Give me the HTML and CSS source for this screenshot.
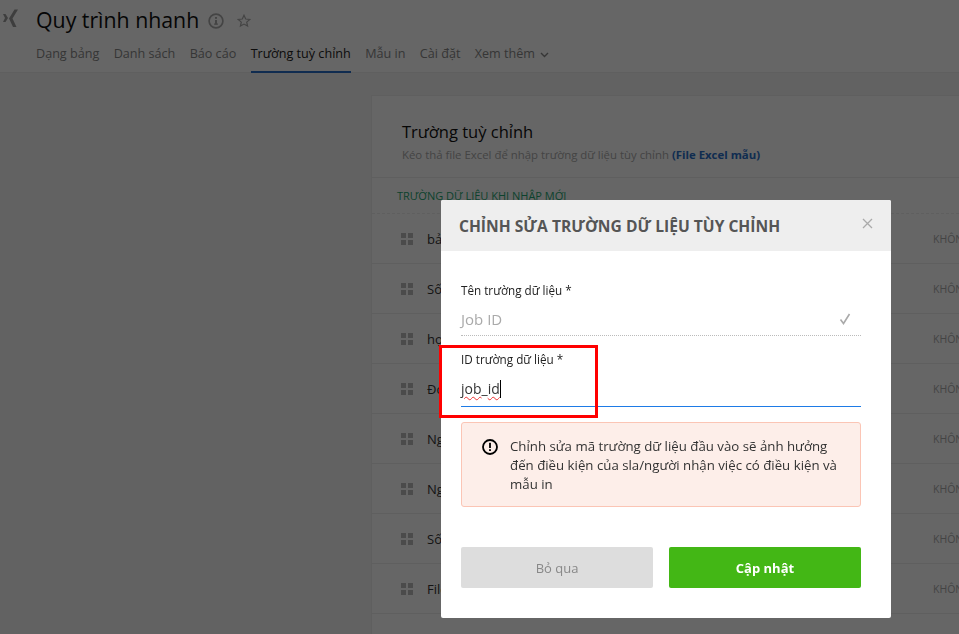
FILE: index.html
```html
<!DOCTYPE html>
<html lang="vi">
<head>
<meta charset="utf-8">
<title>Quy trình nhanh</title>
<link rel="stylesheet" href="styles.css">
</head>
<body>
<header class="topbar">
  <div class="title-row">
    <svg class="logo" width="20" height="20" viewBox="0 0 20 20"><path d="M3 5h2.500L8 9l-2.500 4H3l2-4zM14.500 0.500H18L12.500 9.500 16.500 18h-3.500L9 9.500z" fill="#9c9c9c"/></svg>
    <h1 class="title">Quy trình nhanh</h1>
    <svg class="info" width="16" height="16" viewBox="0 0 16 16"><circle cx="8" cy="8" r="6.900" fill="none" stroke="#aaa" stroke-width="1.700"/><rect x="7" y="7" width="2" height="4.500" fill="#aaa"/><rect x="6" y="10.500" width="4" height="1.200" fill="#aaa"/><rect x="7" y="4" width="2" height="1.800" fill="#aaa"/></svg>
    <svg class="star" width="14" height="14" viewBox="0 0 14 14"><path d="M7 1.200l1.700 3.800 4.100.4-3.100 2.700.9 4L7 10.100 3.400 12.100l.9-4-3.100-2.700 4.100-.4z" fill="none" stroke="#aaa" stroke-width="1.200"/></svg>
  </div>
  <nav class="tabs">
    <a class="tab">Dạng bảng</a>
    <a class="tab">Danh sách</a>
    <a class="tab">Báo cáo</a>
    <a class="tab tab-active">Trường tuỳ chỉnh</a>
    <a class="tab">Mẫu in</a>
    <a class="tab">Cài đặt</a>
    <a class="tab">Xem thêm <svg class="caret" width="9" height="6" viewBox="0 0 9 6"><path d="M1 1l3.500 3.500L8 1" fill="none" stroke="#888" stroke-width="1.400"/></svg></a>
  </nav>
</header>
<main class="content">
  <section class="card">
    <div class="card-head">
      <h2 class="card-title">Trường tuỳ chỉnh</h2>
      <p class="card-sub">Kéo thả file Excel để nhập trường dữ liệu tùy chỉnh <b class="link">(File Excel mẫu)</b></p>
    </div>
    <div class="section-label">TRƯỜNG DỮ LIỆU KHI NHẬP MỚI</div>
    <ul class="rows">
      <li class="row"><span class="grip"><i></i><i></i><i></i><i></i></span><span class="row-name">bảng</span><span class="row-tag">KHÔNG</span></li>
      <li class="row"><span class="grip"><i></i><i></i><i></i><i></i></span><span class="row-name">Số</span><span class="row-tag">KHÔNG</span></li>
      <li class="row"><span class="grip"><i></i><i></i><i></i><i></i></span><span class="row-name">họ</span><span class="row-tag">KHÔNG</span></li>
      <li class="row"><span class="grip"><i></i><i></i><i></i><i></i></span><span class="row-name">Đơn</span><span class="row-tag">KHÔNG</span></li>
      <li class="row"><span class="grip"><i></i><i></i><i></i><i></i></span><span class="row-name">Ngày</span><span class="row-tag">KHÔNG</span></li>
      <li class="row"><span class="grip"><i></i><i></i><i></i><i></i></span><span class="row-name">Ngày</span><span class="row-tag">KHÔNG</span></li>
      <li class="row"><span class="grip"><i></i><i></i><i></i><i></i></span><span class="row-name">Số</span><span class="row-tag">KHÔNG</span></li>
      <li class="row"><span class="grip"><i></i><i></i><i></i><i></i></span><span class="row-name">File</span><span class="row-tag">KHÔNG</span></li>
    </ul>
  </section>
</main>
<div class="overlay"></div>
<div class="modal">
  <div class="modal-head">
    <h3 class="modal-title">CHỈNH SỬA TRƯỜNG DỮ LIỆU TÙY CHỈNH</h3>
    <svg class="close" width="11" height="11" viewBox="0 0 11 11"><path d="M1 1l9 9M10 1l-9 9" stroke="#aaa" stroke-width="1.300"/></svg>
  </div>
  <div class="modal-body">
    <div class="field">
      <label class="label">Tên trường dữ liệu *</label>
      <div class="value value-muted"><span>Job ID</span><svg class="check" width="12" height="12" viewBox="0 0 12 12"><path d="M1.500 6.500l3 4L10.500 1" fill="none" stroke="#aaa" stroke-width="1.600"/></svg></div>
    </div>
    <div class="field field-id">
      <label class="label">ID trường dữ liệu *</label>
      <div class="value value-active"><span><span class="typo">job</span>_<span class="typo">id</span></span><span class="cursor"></span></div>
    </div>
    <div class="alert">
      <svg class="alert-icon" width="16" height="16" viewBox="0 0 16 16"><circle cx="8" cy="8" r="7" fill="none" stroke="#000" stroke-width="1.800"/><rect x="7.100" y="3.800" width="1.800" height="5.200" fill="#000"/><rect x="7.100" y="10.200" width="1.800" height="1.800" fill="#000"/></svg>
      <p class="alert-text">Chỉnh sửa mã trường dữ liệu đầu vào sẽ ảnh hưởng đến điều kiện của sla/người nhận việc có điều kiện và mẫu in</p>
    </div>
    <div class="actions">
      <button class="btn btn-cancel">Bỏ qua</button>
      <button class="btn btn-save">Cập nhật</button>
    </div>
  </div>
</div>
<div class="annotation"></div>
</body>
</html>
```
FILE: styles.css
```css
* { box-sizing: border-box; }
html, body { margin: 0; height: 100%; overflow: hidden; }
body { font-family: "Open Sans", "Noto Sans", sans-serif; background: #f4f4f4; color: #222; }

.topbar { height: 73px; background: #fff; border-bottom: 1px solid #eee; padding-left: 0; }
.title-row { display: flex; align-items: center; height: 41px; }
.logo { flex: none; margin-top: -3px; }
.title { margin: -2px 0 0 16px; font-size: 21.300px; font-weight: 500; line-height: 28px; color: #111; }
.info { margin-left: 9px; }
.star { margin-left: 13px; }
.tabs { display: flex; gap: 14.400px; padding-left: 36px; height: 32px; }
.tab { display: block; font-size: 12.600px; line-height: 25px; color: #888; height: 32px; white-space: nowrap; }
.tab-active { color: #222; font-weight: 500; border-bottom: 2px solid #2a6fc9; }
.caret { margin-left: 2px; }

.content { padding: 22px 0 0 371px; }
.card { background: #fff; border: 1px solid #eee; border-right: 0; height: 560px; }
.card-head { padding: 24px 30px 0; height: 82px; border-bottom: 1px solid #eee; }
.card-title { margin: 0; font-size: 16.500px; font-weight: 500; line-height: 24px; color: #111; }
.card-sub { margin: 3px 0 0; font-size: 11.400px; line-height: 16px; color: #aaa; white-space: nowrap; }
.link { color: #2a6fc9; font-weight: 700; }
.section-label { height: 36px; padding: 10px 0 0 25px; font-size: 11px; line-height: 16px; color: #1ea672; border-bottom: 1px dashed #eee; white-space: nowrap; }
.rows { margin: 0; padding: 0; list-style: none; }
.row { display: flex; align-items: center; height: 50px; padding-left: 29px; border-bottom: 1px solid #eee; }
.grip { display: grid; grid-template-columns: 5px 5px; gap: 2px; width: 12px; }
.grip i { display: block; width: 5px; height: 5px; background: #bbb; }
.row-name { margin-left: 14px; font-size: 13px; color: #333; }
.row-tag { margin-left: auto; width: 26px; font-size: 10.500px; color: #aaa; overflow: hidden; white-space: nowrap; }

.overlay { position: fixed; inset: 0; background: rgba(0, 0, 0, 0.6); }
.modal { position: fixed; left: 441px; top: 200px; width: 450px; height: 418px; background: #fff; border-radius: 2px; overflow: hidden; }
.modal-head { position: relative; height: 51px; background: #eee; padding: 15px 18px 0; }
.modal-title { margin: 0; font-size: 15.600px; font-weight: 700; line-height: 22px; color: #555; white-space: nowrap; }
.close { position: absolute; top: 18px; right: 18px; }
.modal-body { padding: 30px 30px 0 20px; }
.field { height: 55px; }
.field-id { margin-top: 14px; height: 57px; }
.label { display: block; font-size: 11.700px; line-height: 18px; color: #222; }
.value { display: flex; align-items: center; font-size: 14px; height: 37px; border-bottom: 1px dotted #bbb; }
.value-muted { justify-content: space-between; color: #aaa; font-size: 15px; padding-right: 10px; height: 37px; padding-top: 3px; }
.value-active { color: #333; border-bottom: 1px solid #1e7be6; height: 39px; padding-top: 3px; }
.cursor { display: block; width: 1px; height: 18px; background: #000; }
.typo { text-decoration: underline wavy #e33 1px; text-underline-offset: 2px; }

.alert { display: flex; align-items: flex-start; height: 85px; margin-top: 15px; padding: 14px 16px 0 20px; background: #fdeee9; border: 1px solid #fbc5b5; border-radius: 3px; }
.alert-icon { flex: none; margin-top: 2px; }
.alert-text { margin: 0 0 0 12px; font-size: 13.250px; line-height: 19px; color: #333; }

.actions { display: flex; gap: 16px; margin-top: 40px; }
.btn { flex: 1; height: 41px; border: 0; border-radius: 2px; font: inherit; font-size: 13px; }
.btn-cancel { background: #ddd; color: #888; }
.btn-save { background: #43b715; color: #fff; font-weight: 700; }

.annotation { position: fixed; left: 439px; top: 345px; width: 159px; height: 73px; border: 3px solid #f00; }
```
